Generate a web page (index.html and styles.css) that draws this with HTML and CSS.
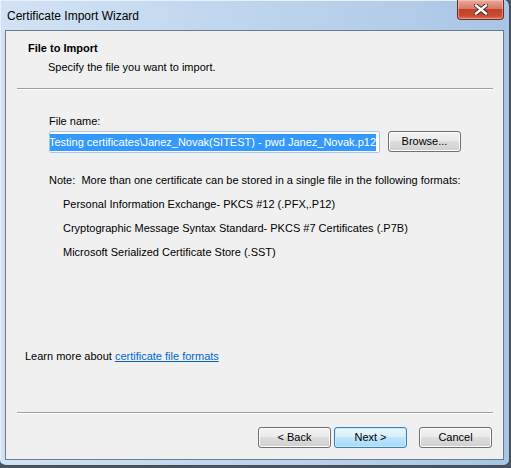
FILE: index.html
```html
<html>

<head>
    <meta charset="utf-8">
    <title>Certificate Import Wizard</title>
    <link rel="stylesheet" href="styles.css">
</head>
<body>
    <div class="window">
        <div class="titlebar">
            <span class="title">Certificate Import Wizard</span>
            <div class="close">
                <svg width="14" height="11" viewBox="0 0 14 11">
                    <path d="M2 1.5 L12 9.5 M12 1.5 L2 9.5" stroke="#3b2520" stroke-width="4.2" stroke-linecap="square" fill="none"/>
                    <path d="M2 1.5 L12 9.5 M12 1.5 L2 9.5" stroke="#fff" stroke-width="2.4" stroke-linecap="square" fill="none"/>
                </svg>
            </div>
        </div>
        <div class="client">
            <div class="page-title">File to Import</div>
            <div class="page-desc">Specify the file you want to import.</div>
            <div class="sep"></div>

            <div class="field-label">File name:</div>
            <div class="file-row">
                <div class="file-input">
                    <span class="sel">Testing certificates\Janez_Novak(SITEST) - pwd Janez_Novak.p12</span>
                </div>
                <div class="btn">Browse...</div>
            </div>

            <div class="note">Note:&nbsp; More than one certificate can be stored in a single file in the following formats:</div>
            <div class="fmt">Personal Information Exchange- PKCS #12 (.PFX,.P12)</div>
            <div class="fmt">Cryptographic Message Syntax Standard- PKCS #7 Certificates (.P7B)</div>
            <div class="fmt">Microsoft Serialized Certificate Store (.SST)</div>

            <div class="learn">Learn more about <a href="#">certificate file formats</a></div>

            <div class="sep sep-bottom"></div>
            <div class="actions">
                <div class="btn">&lt; Back</div>
                <div class="btn btn-default">Next &gt;</div>
                <div class="btn btn-cancel">Cancel</div>
            </div>
        </div>
    </div>
</body>

</html>
```

FILE: styles.css
```css
body {
    margin: 0;
    background: #4a5562;
    font-family: "Liberation Sans", Arial, sans-serif;
    font-size: 11px;
    color: #000;
}

/* aero frame */
.window {
    width: 509px;
    height: 465px;
    display: flex;
    flex-direction: column;
    background: linear-gradient(to right, #d2e2f4, #c0d6ee 45%, #b4cde9 75%, #a8c5e6);
    border-right: 1px solid #3e4c5c;
    border-bottom: 1px solid #3e4c5c;
    border-radius: 0 6px 6px 6px;
    box-shadow: inset 1px 1px 0 #e8f1fb;
}
.titlebar {
    height: 30px;
    display: flex;
    align-items: flex-start;
    justify-content: space-between;
    padding: 0 5px 0 7px;
}
.title {
    font-size: 12px;
    margin-top: 9px;
    line-height: 14px;
}
.close {
    width: 45px;
    height: 19px;
    display: flex;
    align-items: center;
    justify-content: center;
    border: 1px solid #6b2d22;
    border-top: none;
    border-radius: 0 0 4px 4px;
    background: linear-gradient(#e9a99b, #d67a66 45%, #c3412a 50%, #c8492f 80%, #d96f55);
    box-shadow: inset 0 0 0 1px rgba(255, 220, 210, 0.45);
}

.client {
    height: 428px;
    margin: 0 5px 0 5px;
    display: flex;
    flex-direction: column;
    background: #f0f0f0;
    border: 1px solid #6a7b8e;
}
.page-title {
    font-weight: bold;
    line-height: 16px;
    margin: 9px 0 0 22px;
}
.page-desc {
    line-height: 16px;
    margin: 3px 0 0 42px;
}
.sep {
    height: 0;
    margin: 13px 10px 0 11px;
    border-top: 1px solid #a0a0a0;
    border-bottom: 1px solid #fff;
}
.field-label {
    line-height: 16px;
    margin: 23px 0 0 43px;
}
.file-row {
    display: flex;
    margin: 2px 0 0 43px;
    gap: 8px;
}
.file-input {
    width: 325px;
    height: 20px;
    display: flex;
    justify-content: flex-end;
    align-items: center;
    overflow: hidden;
    white-space: nowrap;
    background: #fff;
    border: 1px solid #a7c6e4;
    border-radius: 2px;
    padding: 0 3px 0 1px;
}
.sel {
    background: #3399ff;
    color: #fff;
    line-height: 17px;
}
.note {
    line-height: 16px;
    margin: 19px 0 0 43px;
}
.fmt {
    line-height: 16px;
    margin: 8px 0 0 57px;
}
.learn {
    line-height: 16px;
    margin: 88px 0 0 19px;
}
.learn a {
    color: #0066cc;
}
.sep-bottom {
    margin-top: auto;
}
.actions {
    display: flex;
    justify-content: flex-end;
    margin: 13px 11px 11px 0;
    gap: 3px;
}

/* push buttons */
.btn {
    width: 71px;
    height: 19px;
    line-height: 19px;
    text-align: center;
    border: 1px solid #707070;
    border-radius: 3px;
    background: linear-gradient(#f2f2f2, #ebebeb 45%, #dddddd 50%, #cfcfcf);
    box-shadow: inset 0 0 0 1px #fcfcfc;
}
.btn-default {
    border-color: #3c7fb1;
    background: linear-gradient(#eaf6fd, #d9f0fc 45%, #bee6fd 50%, #a7d9f5);
    box-shadow: inset 0 0 0 1px #c6e9fb;
}
.btn-cancel {
    margin-left: 9px;
}
```
